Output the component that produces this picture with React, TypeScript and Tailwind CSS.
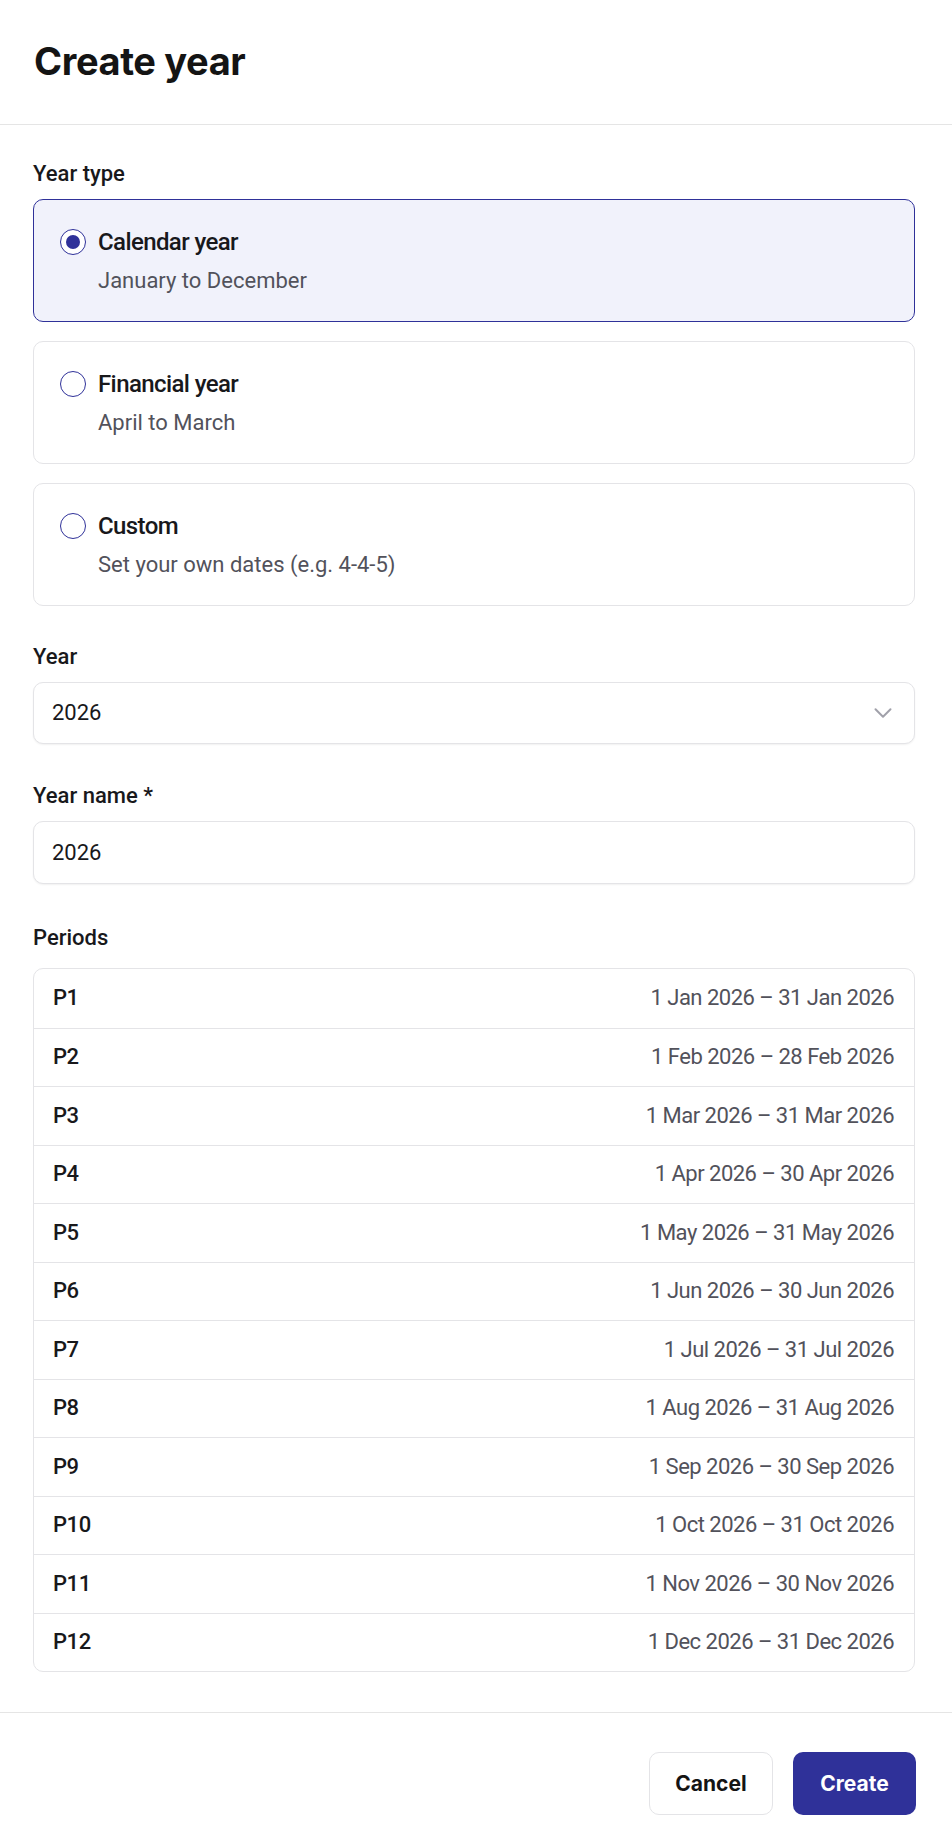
import React from "react";

function Radio({ checked }: { checked: boolean }) {
  return (
    <div className="flex h-[36px] shrink-0 items-center">
      <div className="flex h-[26px] w-[26px] items-center justify-center rounded-full border-[1.5px] border-[#2f3199] bg-white">
        {checked && <div className="h-[14px] w-[14px] rounded-full bg-[#2f3199]" />}
      </div>
    </div>
  );
}

function OptionCard({
  title,
  desc,
  checked,
}: {
  title: string;
  desc: string;
  checked?: boolean;
}) {
  return (
    <div
      className={
        checked
          ? "flex gap-[12px] rounded-[10px] border border-[#2f3199] bg-[#f1f2fb] pl-[26px] pr-[24px] pt-[24px] pb-[25px]"
          : "flex gap-[12px] rounded-[10px] border border-[#e4e4e7] bg-white pl-[26px] pr-[24px] pt-[24px] pb-[25px]"
      }
    >
      <Radio checked={!!checked} />
      <div className="flex flex-col">
        <div className="text-[24px] leading-[36px] font-medium tracking-[-0.025em] text-[#18181b]">{title}</div>
        <div className="mt-[6px] text-[22px] leading-[30px] text-[#52525b]">{desc}</div>
      </div>
    </div>
  );
}

const periods = [
  ["P1", "1 Jan 2026 – 31 Jan 2026"],
  ["P2", "1 Feb 2026 – 28 Feb 2026"],
  ["P3", "1 Mar 2026 – 31 Mar 2026"],
  ["P4", "1 Apr 2026 – 30 Apr 2026"],
  ["P5", "1 May 2026 – 31 May 2026"],
  ["P6", "1 Jun 2026 – 30 Jun 2026"],
  ["P7", "1 Jul 2026 – 31 Jul 2026"],
  ["P8", "1 Aug 2026 – 31 Aug 2026"],
  ["P9", "1 Sep 2026 – 30 Sep 2026"],
  ["P10", "1 Oct 2026 – 31 Oct 2026"],
  ["P11", "1 Nov 2026 – 30 Nov 2026"],
  ["P12", "1 Dec 2026 – 31 Dec 2026"],
];

export default function App() {
  return (
    <div className="min-h-screen bg-white font-['Roboto','Liberation_Sans',sans-serif] text-[#18181b]">
      <header className="border-b border-[#e5e5e5] pl-[34px] pt-[41px] pb-[43px]">
        <h1 className="font-['Inter',sans-serif] text-[38px] leading-[40px] font-bold tracking-[-0.01em] text-[#141414]">
          Create year
        </h1>
      </header>

      <main className="pl-[33px] pr-[37px] pt-[34px] pb-[40px]">
        <div className="mb-[10px] text-[22px] leading-[30px] font-medium">Year type</div>
        <div className="flex flex-col gap-[19px]">
          <OptionCard title="Calendar year" desc="January to December" checked />
          <OptionCard title="Financial year" desc="April to March" />
          <OptionCard title="Custom" desc="Set your own dates (e.g. 4-4-5)" />
        </div>

        <div className="mt-[36px] mb-[10px] text-[22px] leading-[30px] font-medium">Year</div>
        <div className="flex h-[62px] items-center justify-between rounded-[10px] border border-[#e4e4e7] bg-white pl-[18px] pr-[16px] shadow-[0_1px_2px_rgba(0,0,0,0.06)]">
          <span className="text-[22px] leading-[30px] text-[#18181b]">2026</span>
          <svg
            width="30"
            height="30"
            viewBox="0 0 24 24"
            fill="none"
            stroke="#a1a1aa"
            strokeWidth="1.6"
            strokeLinecap="round"
            strokeLinejoin="round"
          >
            <path d="m6 9 6 6 6-6" />
          </svg>
        </div>

        <div className="mt-[37px] mb-[10px] text-[22px] leading-[30px] font-medium">Year name *</div>
        <div className="flex h-[63px] items-center rounded-[10px] border border-[#e4e4e7] bg-white pl-[18px] pr-[16px] shadow-[0_1px_2px_rgba(0,0,0,0.06)]">
          <span className="text-[22px] leading-[30px] text-[#18181b]">2026</span>
        </div>

        <div className="mt-[39px] mb-[15px] text-[22px] leading-[30px] font-medium">Periods</div>
        <div className="overflow-hidden rounded-[10px] border border-[#e4e4e7]">
          {periods.map(([p, range], i) => (
            <div
              key={p}
              className={
                i === 0
                  ? "flex h-[58.5px] items-center justify-between pl-[19px] pr-[20px]"
                  : "flex h-[58.5px] items-center justify-between border-t border-[#e4e4e7] pl-[19px] pr-[20px]"
              }
            >
              <span className="text-[22px] leading-[30px] font-medium tracking-[-0.02em] text-[#18181b]">{p}</span>
              <span className="text-[22px] leading-[30px] tracking-[-0.023em] text-[#52525b]">{range}</span>
            </div>
          ))}
        </div>
      </main>

      <footer className="flex justify-end gap-[20px] border-t border-[#e5e5e5] pt-[39px] pb-[33px] pr-[36px] font-['Inter',sans-serif]">
        <button className="h-[63px] w-[124px] rounded-[10px] border border-[#e4e4e7] bg-white text-[21px] font-bold text-[#141414]">
          Cancel
        </button>
        <button className="h-[63px] w-[123px] rounded-[10px] bg-[#2f3199] text-[21px] font-bold text-white">
          Create
        </button>
      </footer>
    </div>
  );
}
